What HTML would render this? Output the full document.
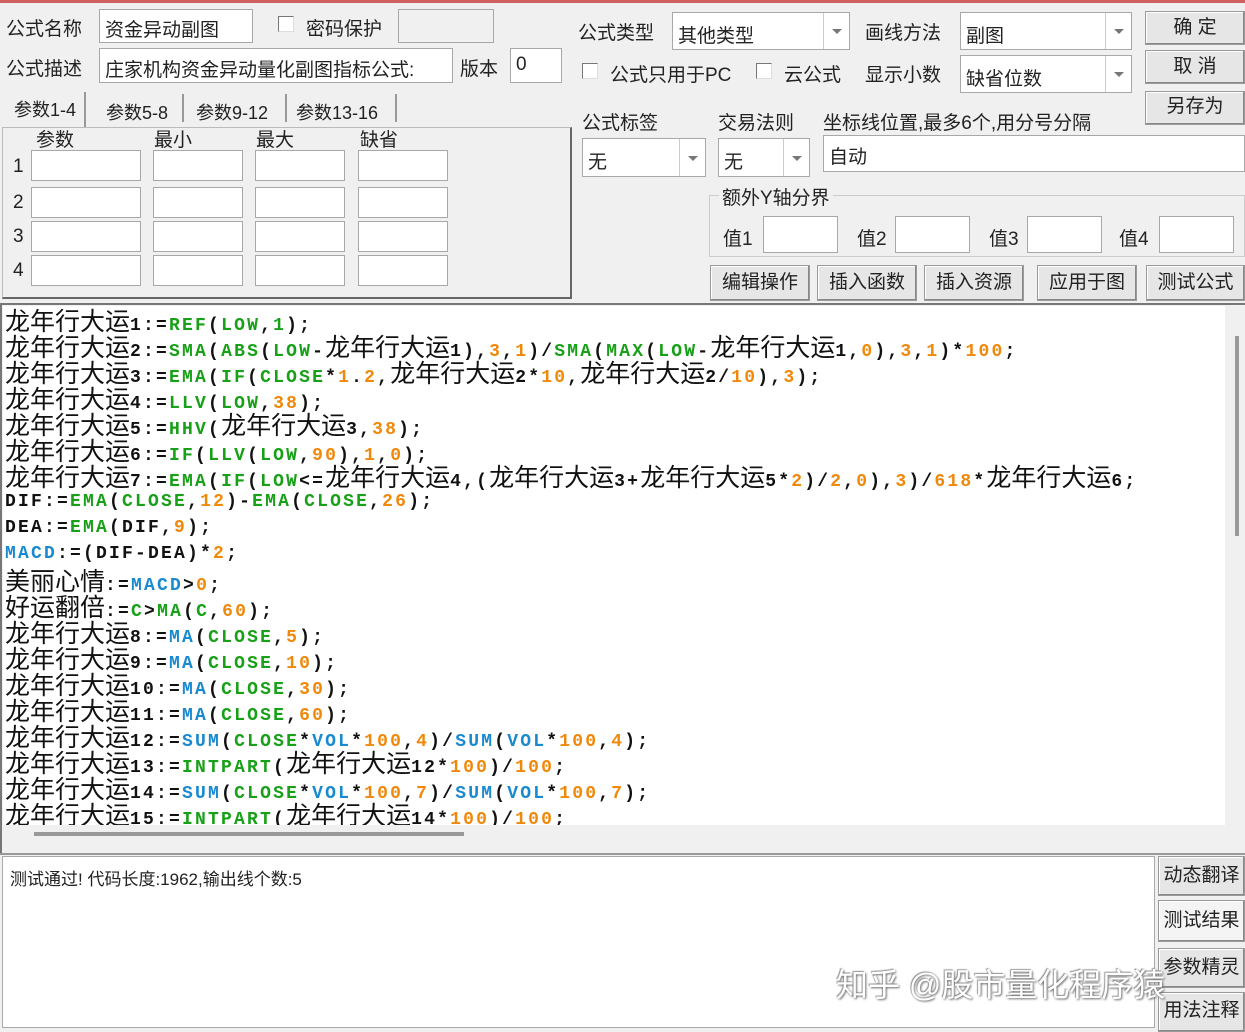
<!DOCTYPE html>
<html><head><meta charset="utf-8"><style>
*{margin:0;padding:0;box-sizing:border-box}
body{width:1245px;height:1032px;background:#f0f0f0;position:relative;overflow:hidden;font-family:"Liberation Sans","Noto Sans CJK SC",sans-serif;font-size:19px;color:#222}
.a{position:absolute;white-space:nowrap}
.box{position:absolute;background:#fff;border:1px solid #a8a8a8}
.btn{position:absolute;background:#e6e6e6;border:1px solid #9a9a9a;box-shadow:inset -1px -1px 0 #888,inset 1px 1px 0 #fff;text-align:center;font-size:19px}
.cb{position:absolute;width:16px;height:16px;background:#fff;border:1px solid #777;border-right-color:#ddd;border-bottom-color:#ddd}
.dd{position:absolute;top:0;right:0;bottom:0;width:26px;border-left:1px solid #ccc}
.dd:after{content:"";position:absolute;left:8px;top:50%;margin-top:-2px;border:5px solid transparent;border-top:5px solid #777}
.code{position:absolute;left:5px;top:307px;font-family:"Liberation Mono",monospace;font-weight:bold;font-size:18px;letter-spacing:2.2px;line-height:26px;color:#111}
.code div{height:26px}
.c{font-family:"Noto Sans CJK SC",sans-serif;font-weight:normal;font-size:25px;letter-spacing:0;line-height:26px}
.g{color:#18a018}.o{color:#f0880a}.b{color:#1a8ad0}
</style></head><body>
<div class="a" style="left:0;top:0;width:1245px;height:3px;background:#d06060"></div>
<div class="a" style="left:6px;top:14px">公式名称</div>
<div class="box" style="left:99px;top:9px;width:154px;height:34px"><span class="a" style="left:5px;top:5px">资金异动副图</span></div>
<div class="cb" style="left:278px;top:16px"></div>
<div class="a" style="left:306px;top:14px">密码保护</div>
<div class="box" style="left:398px;top:9px;width:96px;height:34px;background:#f0f0f0"></div>
<div class="a" style="left:6px;top:54px">公式描述</div>
<div class="box" style="left:99px;top:48px;width:354px;height:35px"><span class="a" style="left:5px;top:6px">庄家机构资金异动量化副图指标公式:</span></div>
<div class="a" style="left:460px;top:54px">版本</div>
<div class="box" style="left:510px;top:48px;width:52px;height:35px"><span class="a" style="left:5px;top:5px">0</span></div>

<div class="a" style="left:14px;top:96px;font-size:18px">参数1-4</div>
<div class="a" style="left:84px;top:92px;width:2px;height:36px;background:#999"></div>
<div class="a" style="left:106px;top:99px;font-size:18px">参数5-8</div>
<div class="a" style="left:182px;top:94px;width:2px;height:28px;background:#999"></div>
<div class="a" style="left:196px;top:99px;font-size:18px">参数9-12</div>
<div class="a" style="left:285px;top:94px;width:2px;height:28px;background:#999"></div>
<div class="a" style="left:296px;top:99px;font-size:18px">参数13-16</div>
<div class="a" style="left:395px;top:94px;width:2px;height:28px;background:#999"></div>
<div class="a" style="left:2px;top:127px;width:570px;height:172px;border:1px solid #bbb;border-right:2px solid #666;border-bottom:2px solid #666"></div>
<div class="a" style="left:36px;top:125px">参数</div><div class="a" style="left:154px;top:125px">最小</div><div class="a" style="left:256px;top:125px">最大</div><div class="a" style="left:360px;top:125px">缺省</div>
<div class="a" style="left:13px;top:156px">1</div><div class="a" style="left:13px;top:192px">2</div><div class="a" style="left:13px;top:226px">3</div><div class="a" style="left:13px;top:260px">4</div>
<div class="box" style="left:28px;top:150px;width:95px;height:31px"></div><div class="box" style="left:133px;top:150px;width:79px;height:31px"></div><div class="box" style="left:222px;top:150px;width:79px;height:31px"></div><div class="box" style="left:312px;top:150px;width:79px;height:31px"></div>
<div class="box" style="left:28px;top:187px;width:95px;height:31px"></div><div class="box" style="left:133px;top:187px;width:79px;height:31px"></div><div class="box" style="left:222px;top:187px;width:79px;height:31px"></div><div class="box" style="left:312px;top:187px;width:79px;height:31px"></div>
<div class="box" style="left:28px;top:221px;width:95px;height:31px"></div><div class="box" style="left:133px;top:221px;width:79px;height:31px"></div><div class="box" style="left:222px;top:221px;width:79px;height:31px"></div><div class="box" style="left:312px;top:221px;width:79px;height:31px"></div>
<div class="box" style="left:28px;top:255px;width:95px;height:31px"></div><div class="box" style="left:133px;top:255px;width:79px;height:31px"></div><div class="box" style="left:222px;top:255px;width:79px;height:31px"></div><div class="box" style="left:312px;top:255px;width:79px;height:31px"></div>
<style>.box[style*="width:95px"]{left:31px!important;width:110px!important}.box[style*="left:133px"]{left:153px!important;width:90px!important}.box[style*="left:222px"]{left:255px!important;width:90px!important}.box[style*="left:312px"]{left:358px!important;width:90px!important}</style>

<div class="a" style="left:578px;top:18px">公式类型</div>
<div class="box" style="left:672px;top:12px;width:178px;height:38px"><span class="a" style="left:5px;top:8px">其他类型</span><div class="dd"></div></div>
<div class="a" style="left:865px;top:18px">画线方法</div>
<div class="box" style="left:960px;top:12px;width:172px;height:38px"><span class="a" style="left:5px;top:8px">副图</span><div class="dd"></div></div>
<div class="cb" style="left:582px;top:63px"></div><div class="a" style="left:610px;top:60px">公式只用于PC</div>
<div class="cb" style="left:756px;top:63px"></div><div class="a" style="left:784px;top:60px">云公式</div>
<div class="a" style="left:865px;top:60px">显示小数</div>
<div class="box" style="left:960px;top:55px;width:172px;height:38px"><span class="a" style="left:5px;top:8px">缺省位数</span><div class="dd"></div></div>
<div class="btn" style="left:1145px;top:11px;width:100px;height:34px;line-height:32px">确 定</div>
<div class="btn" style="left:1145px;top:50px;width:100px;height:34px;line-height:32px">取 消</div>
<div class="btn" style="left:1145px;top:91px;width:100px;height:34px;line-height:30px">另存为</div>
<div class="a" style="left:582px;top:108px">公式标签</div><div class="a" style="left:718px;top:108px">交易法则</div><div class="a" style="left:823px;top:108px">坐标线位置,最多6个,用分号分隔</div>
<div class="box" style="left:582px;top:138px;width:124px;height:39px"><span class="a" style="left:5px;top:8px">无</span><div class="dd"></div></div>
<div class="box" style="left:718px;top:138px;width:92px;height:39px"><span class="a" style="left:5px;top:8px">无</span><div class="dd"></div></div>
<div class="box" style="left:823px;top:135px;width:422px;height:37px"><span class="a" style="left:5px;top:6px">自动</span></div>
<div class="a" style="left:709px;top:195px;width:536px;height:62px;border:1px solid #ccc"></div>
<div class="a" style="left:719px;top:183px;background:#f0f0f0;padding:0 3px">额外Y轴分界</div>
<div class="a" style="left:723px;top:224px">值1</div><div class="box" style="left:763px;top:216px;width:75px;height:37px"></div>
<div class="a" style="left:857px;top:224px">值2</div><div class="box" style="left:895px;top:216px;width:75px;height:37px"></div>
<div class="a" style="left:989px;top:224px">值3</div><div class="box" style="left:1027px;top:216px;width:75px;height:37px"></div>
<div class="a" style="left:1119px;top:224px">值4</div><div class="box" style="left:1159px;top:216px;width:75px;height:37px"></div>
<div class="btn" style="left:710px;top:265px;width:100px;height:36px;line-height:34px">编辑操作</div>
<div class="btn" style="left:817px;top:265px;width:100px;height:36px;line-height:34px">插入函数</div>
<div class="btn" style="left:924px;top:265px;width:100px;height:36px;line-height:34px">插入资源</div>
<div class="btn" style="left:1037px;top:265px;width:100px;height:36px;line-height:34px">应用于图</div>
<div class="btn" style="left:1146px;top:265px;width:99px;height:36px;line-height:34px">测试公式</div>

<div class="a" style="left:0;top:303px;width:1245px;height:550px;border-top:2px solid #777;border-left:2px solid #777;background:#f0f0f0"></div>
<div class="a" style="left:3px;top:306px;width:1222px;height:519px;background:#fff"></div>
<div class="a" style="left:1235px;top:336px;width:4px;height:200px;background:#999"></div>
<div class="a" style="left:34px;top:832px;width:430px;height:4px;background:#999"></div>
<div class="code" style="height:518px;overflow:hidden;width:1220px">
<div><span class="c">龙年行大运</span>1:=<span class="g">REF</span>(<span class="g">LOW</span>,<span class="g">1</span>);</div>
<div><span class="c">龙年行大运</span>2:=<span class="g">SMA</span>(<span class="g">ABS</span>(<span class="g">LOW</span>-<span class="c">龙年行大运</span>1),<span class="o">3</span>,<span class="o">1</span>)/<span class="g">SMA</span>(<span class="g">MAX</span>(<span class="g">LOW</span>-<span class="c">龙年行大运</span>1,<span class="o">0</span>),<span class="o">3</span>,<span class="o">1</span>)*<span class="o">100</span>;</div>
<div><span class="c">龙年行大运</span>3:=<span class="g">EMA</span>(<span class="g">IF</span>(<span class="g">CLOSE</span>*<span class="o">1</span>.<span class="o">2</span>,<span class="c">龙年行大运</span>2*<span class="o">10</span>,<span class="c">龙年行大运</span>2/<span class="o">10</span>),<span class="o">3</span>);</div>
<div><span class="c">龙年行大运</span>4:=<span class="g">LLV</span>(<span class="g">LOW</span>,<span class="o">38</span>);</div>
<div><span class="c">龙年行大运</span>5:=<span class="g">HHV</span>(<span class="c">龙年行大运</span>3,<span class="o">38</span>);</div>
<div><span class="c">龙年行大运</span>6:=<span class="g">IF</span>(<span class="g">LLV</span>(<span class="g">LOW</span>,<span class="o">90</span>),<span class="o">1</span>,<span class="o">0</span>);</div>
<div><span class="c">龙年行大运</span>7:=<span class="g">EMA</span>(<span class="g">IF</span>(<span class="g">LOW</span>&lt;=<span class="c">龙年行大运</span>4,(<span class="c">龙年行大运</span>3+<span class="c">龙年行大运</span>5*<span class="o">2</span>)/<span class="o">2</span>,<span class="o">0</span>),<span class="o">3</span>)/<span class="o">618</span>*<span class="c">龙年行大运</span>6;</div>
<div>DIF:=<span class="g">EMA</span>(<span class="g">CLOSE</span>,<span class="o">12</span>)-<span class="g">EMA</span>(<span class="g">CLOSE</span>,<span class="o">26</span>);</div>
<div>DEA:=<span class="g">EMA</span>(DIF,<span class="o">9</span>);</div>
<div><span class="b">MACD</span>:=(DIF-DEA)*<span class="o">2</span>;</div>
<div><span class="c">美丽心情</span>:=<span class="b">MACD</span>&gt;<span class="o">0</span>;</div>
<div><span class="c">好运翻倍</span>:=<span class="g">C</span>&gt;<span class="g">MA</span>(<span class="g">C</span>,<span class="o">60</span>);</div>
<div><span class="c">龙年行大运</span>8:=<span class="b">MA</span>(<span class="g">CLOSE</span>,<span class="o">5</span>);</div>
<div><span class="c">龙年行大运</span>9:=<span class="b">MA</span>(<span class="g">CLOSE</span>,<span class="o">10</span>);</div>
<div><span class="c">龙年行大运</span>10:=<span class="b">MA</span>(<span class="g">CLOSE</span>,<span class="o">30</span>);</div>
<div><span class="c">龙年行大运</span>11:=<span class="b">MA</span>(<span class="g">CLOSE</span>,<span class="o">60</span>);</div>
<div><span class="c">龙年行大运</span>12:=<span class="b">SUM</span>(<span class="g">CLOSE</span>*<span class="b">VOL</span>*<span class="o">100</span>,<span class="o">4</span>)/<span class="b">SUM</span>(<span class="b">VOL</span>*<span class="o">100</span>,<span class="o">4</span>);</div>
<div><span class="c">龙年行大运</span>13:=<span class="g">INTPART</span>(<span class="c">龙年行大运</span>12*<span class="o">100</span>)/<span class="o">100</span>;</div>
<div><span class="c">龙年行大运</span>14:=<span class="b">SUM</span>(<span class="g">CLOSE</span>*<span class="b">VOL</span>*<span class="o">100</span>,<span class="o">7</span>)/<span class="b">SUM</span>(<span class="b">VOL</span>*<span class="o">100</span>,<span class="o">7</span>);</div>
<div><span class="c">龙年行大运</span>15:=<span class="g">INTPART</span>(<span class="c">龙年行大运</span>14*<span class="o">100</span>)/<span class="o">100</span>;</div>
</div>

<div class="a" style="left:0;top:853px;width:1245px;height:2px;background:#999"></div>
<div class="a" style="left:2px;top:856px;width:1153px;height:172px;background:#fff;border:1px solid #aaa"></div>
<div class="a" style="left:10px;top:865px;font-size:17px">测试通过! 代码长度:1962,输出线个数:5</div>
<div class="btn" style="left:1158px;top:856px;width:87px;height:40px;line-height:38px">动态翻译</div>
<div class="btn" style="left:1158px;top:900px;width:87px;height:42px;line-height:40px;background:#f4f4f4">测试结果</div>
<div class="btn" style="left:1158px;top:948px;width:87px;height:40px;line-height:38px">参数精灵</div>
<div class="btn" style="left:1158px;top:992px;width:87px;height:40px;line-height:36px">用法注释</div>
<div class="a" style="left:836px;top:960px;font-size:32px;color:#fff;text-shadow:1px 1px 2px #666,-1px -1px 1px #999">知乎 @股市量化程序猿</div>
</body></html>
